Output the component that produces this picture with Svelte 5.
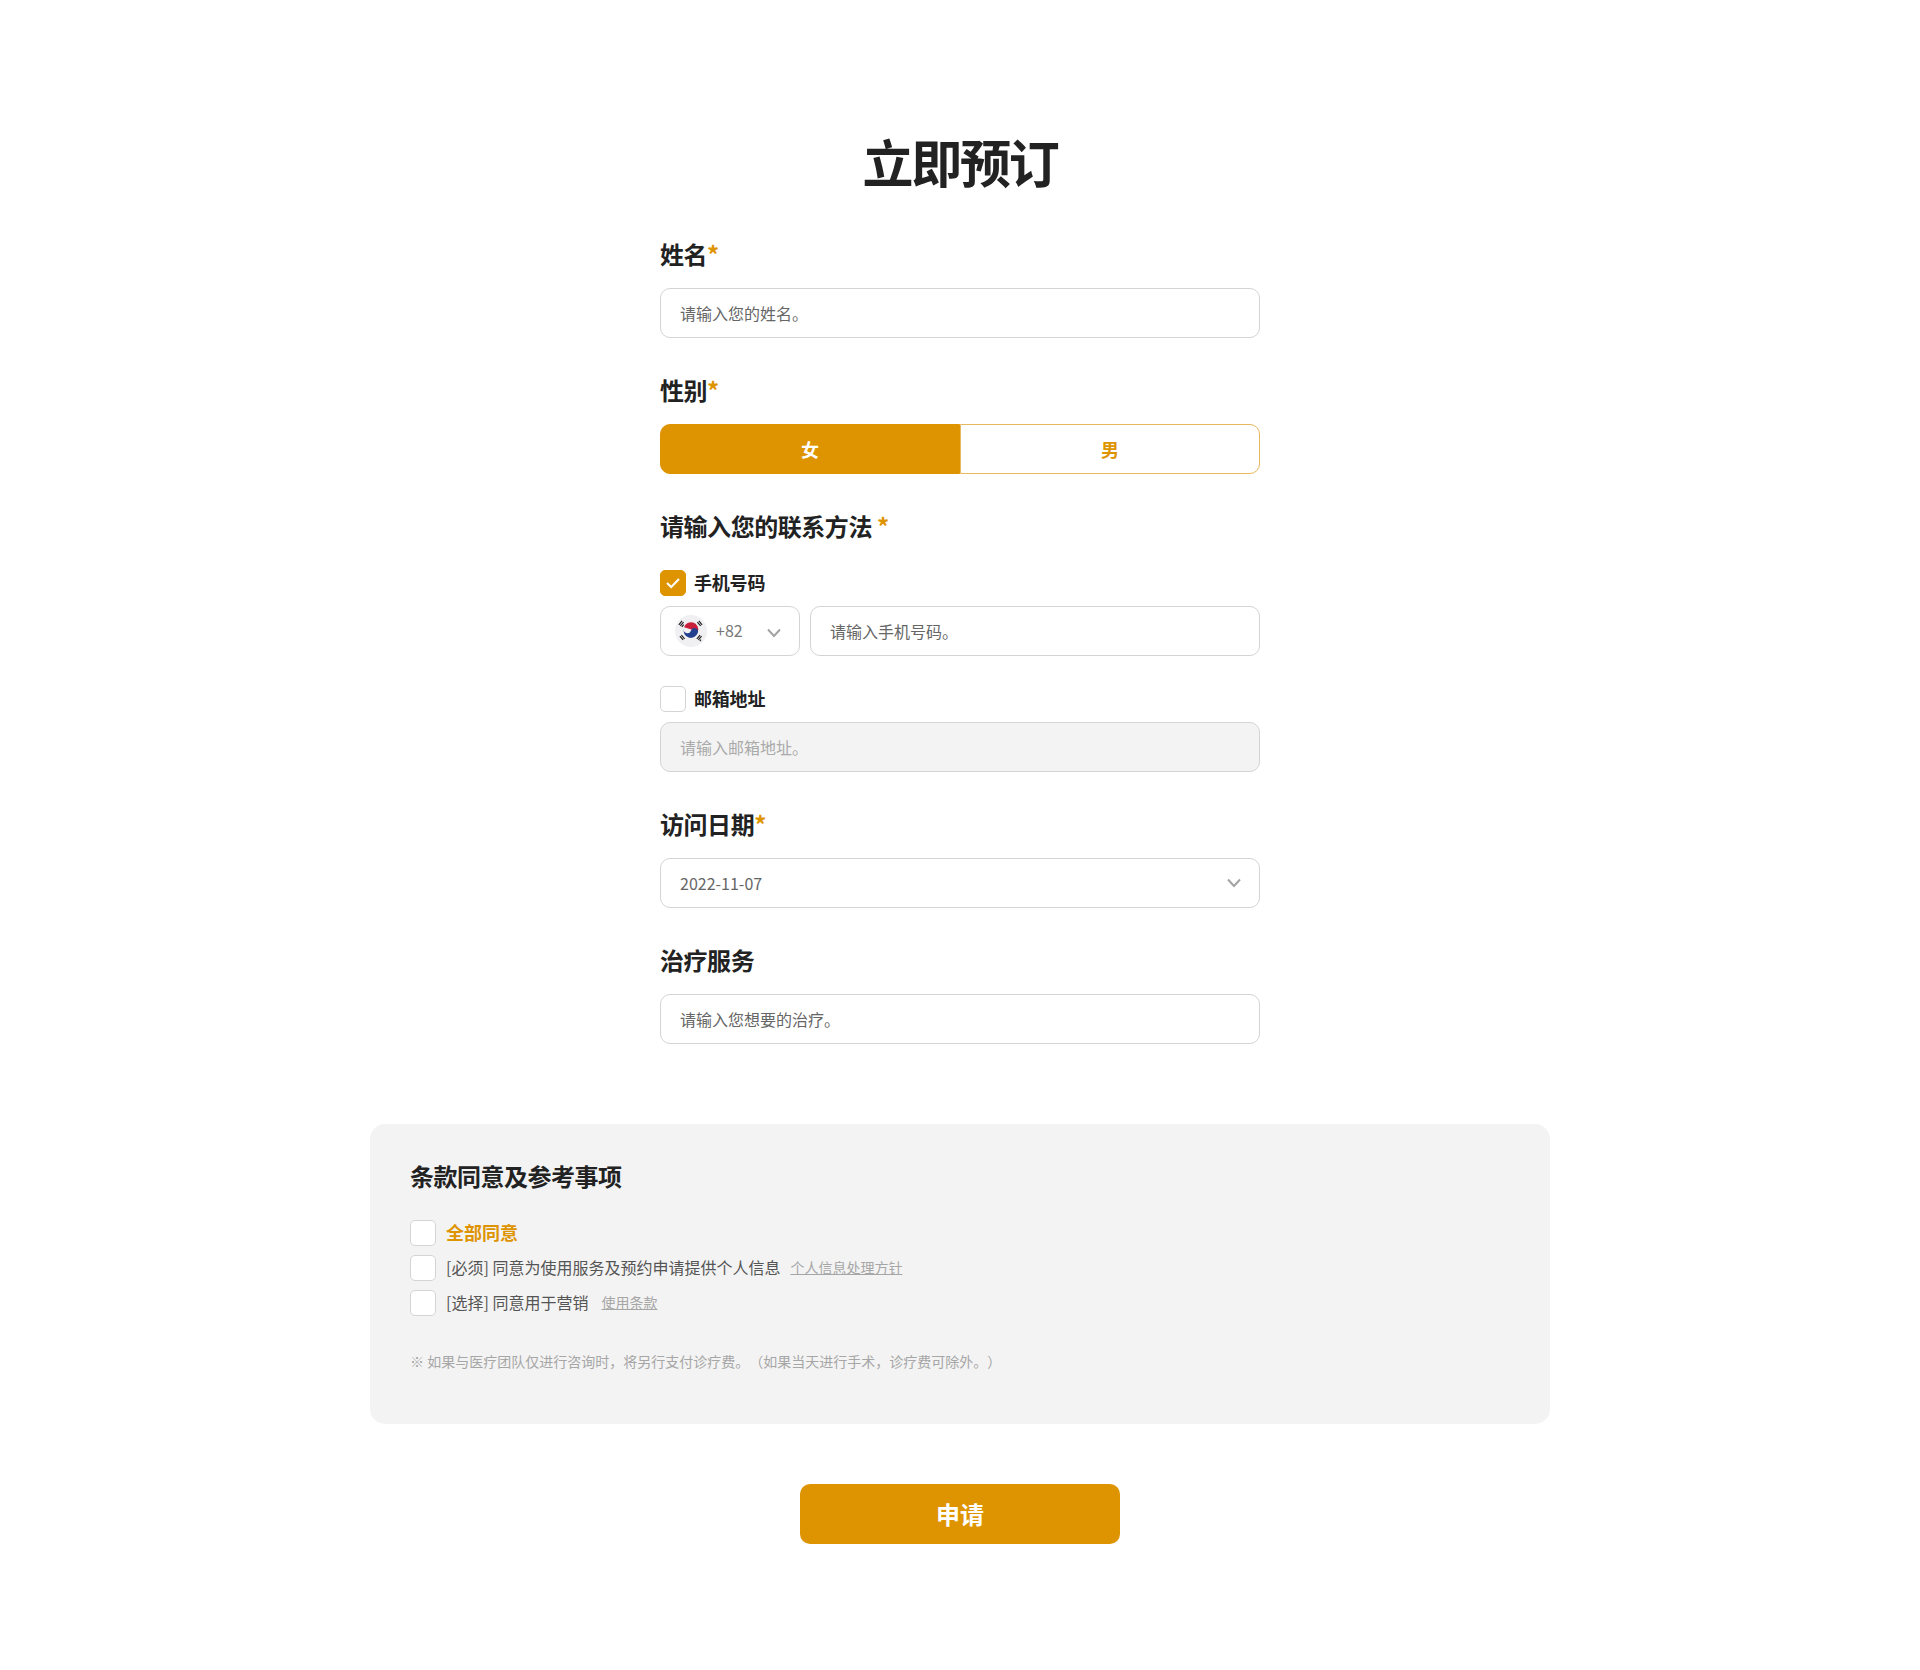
<script lang="ts">
	let gender = $state('female');
	let usePhone = $state(true);
	let useEmail = $state(false);
	let agreeAll = $state(false);
	let agreePrivacy = $state(false);
	let agreeMarketing = $state(false);
</script>

{#snippet chevron()}
	<svg class="chevron" width="16" height="10" viewBox="0 0 16 10" aria-hidden="true">
		<path d="M2 1.5 L8 8 L14 1.5" fill="none" stroke="#a3a3a3" stroke-width="2" />
	</svg>
{/snippet}

{#snippet check(checked: boolean, toggle: () => void)}
	<button class="check" class:checked onclick={toggle} aria-pressed={checked} aria-label="toggle">
		{#if checked}
			<svg width="16" height="12" viewBox="0 0 16 12" aria-hidden="true">
				<path d="M2 6 L6.2 10 L14 2" fill="none" stroke="#fff" stroke-width="2" />
			</svg>
		{/if}
	</button>
{/snippet}

<main class="page">
	<h1>立即预订</h1>

	<form class="form" onsubmit={(e) => e.preventDefault()}>
		<section class="group">
			<h2>姓名<em>*</em></h2>
			<input class="field" placeholder="请输入您的姓名。" />
		</section>

		<section class="group">
			<h2>性别<em>*</em></h2>
			<div class="gender">
				<button type="button" class:on={gender === 'female'} onclick={() => (gender = 'female')}>女</button>
				<button type="button" class:on={gender === 'male'} onclick={() => (gender = 'male')}>男</button>
			</div>
		</section>

		<section class="group contact">
			<h2>请输入您的联系方法 <em>*</em></h2>
			<div class="check-row">
				{@render check(usePhone, () => (usePhone = !usePhone))}
				<span>手机号码</span>
			</div>
			<div class="phone">
				<div class="country">
					<svg class="flag" width="32" height="32" viewBox="0 0 30 30" aria-hidden="true">
						<circle cx="15" cy="15" r="15" fill="#f0f0f3" />
						<path d="M8.5 11.5a6.8 6.8 0 0 1 13 4z" fill="#c8203a" />
						<path d="M8.4 12.5a6.8 6.8 0 0 0 13 4.2 3.4 3.4 0 0 0-6.5-2 3.4 3.4 0 0 1-6.5-2.2z" fill="#23408f" />
						<g stroke="#222" stroke-width="1.1" fill="none">
							<path d="M4.6 10.2l3-3.6M6 11.2l3-3.6M7.400 12.200l1.800-2.200" transform="translate(-1 -1)" />
							<path d="M21 6.600l3 3.600M22.400 5.600l3 3.600" />
							<path d="M4.600 19.800l3 3.600M6 18.800l3 3.600" />
							<path d="M21 23.400l3-3.600M22.400 24.400l3-3.600M23.800 25.400l1-1.200" transform="translate(-.5 -1)" />
						</g>
					</svg>
					<span class="code">+82</span>
					{@render chevron()}
				</div>
				<input class="field" placeholder="请输入手机号码。" />
			</div>
			<div class="check-row email-row">
				{@render check(useEmail, () => (useEmail = !useEmail))}
				<span>邮箱地址</span>
			</div>
			<input class="field" placeholder="请输入邮箱地址。" disabled={!useEmail} />
		</section>

		<section class="group">
			<h2>访问日期<em>*</em></h2>
			<div class="field select">
				<span>2022-11-07</span>
				{@render chevron()}
			</div>
		</section>

		<section class="group">
			<h2>治疗服务</h2>
			<input class="field" placeholder="请输入您想要的治疗。" />
		</section>
	</form>

	<section class="terms">
		<h3>条款同意及参考事项</h3>
		<div class="term all">
			{@render check(agreeAll, () => (agreeAll = !agreeAll))}
			<span>全部同意</span>
		</div>
		<div class="term">
			{@render check(agreePrivacy, () => (agreePrivacy = !agreePrivacy))}
			<span>[必须] 同意为使用服务及预约申请提供个人信息</span>
			<a href="#privacy">个人信息处理方针</a>
		</div>
		<div class="term">
			{@render check(agreeMarketing, () => (agreeMarketing = !agreeMarketing))}
			<span>[选择] 同意用于营销</span>
			<a class="wide" href="#terms">使用条款</a>
		</div>
		<p class="note">※ 如果与医疗团队仅进行咨询时，将另行支付诊疗费。（如果当天进行手术，诊疗费可除外。）</p>
	</section>

	<button class="submit" type="button">申请</button>
</main>

<style>
	:global(body) {
		background: #fff;
	}

	.page {
		min-height: 1670px;
		box-sizing: border-box;
		padding-top: 126px;
		display: flex;
		flex-direction: column;
		align-items: center;
		font-family: "Noto Sans CJK SC", "Noto Sans", sans-serif;
		color: #222;
		text-spacing-trim: space-all;
	}

	h1 {
		margin: 0;
		font-size: 51px;
		line-height: 70px;
		font-weight: 700;
		letter-spacing: -0.045em;
	}

	.form {
		width: 600px;
		margin-top: 41px;
		display: flex;
		flex-direction: column;
		gap: 35px;
	}

	.group {
		display: flex;
		flex-direction: column;
	}

	h2 {
		margin: 0 0 17px;
		font-size: 24px;
		line-height: 34px;
		font-weight: 700;
		letter-spacing: -0.45px;
	}

	em {
		font-style: normal;
		color: #de9400;
	}

	.field {
		box-sizing: border-box;
		width: 100%;
		height: 50px;
		padding: 0 19px;
		border: 1px solid #d4d4d4;
		border-radius: 10px;
		background: #fff;
		font: inherit;
		font-size: 16px;
		color: #666;
		outline: none;
	}

	.field::placeholder {
		color: #666;
		opacity: 1;
	}

	.field:disabled {
		background: #f3f3f3;
	}

	.field:disabled::placeholder {
		color: #aaa;
	}

	.gender {
		display: grid;
		grid-template-columns: 1fr 1fr;
		height: 50px;
	}

	.gender button {
		border: 1px solid #e8b85e;
		background: #fff;
		font: inherit;
		font-size: 18px;
		font-weight: 700;
		color: #de9400;
	}

	.gender button:first-child {
		border-radius: 10px 0 0 10px;
	}

	.gender button:last-child {
		border-radius: 0 10px 10px 0;
	}

	.gender button.on {
		background: #de9400;
		border-color: #de9400;
		color: #fff;
	}

	.contact h2 {
		margin-bottom: 27px;
	}

	.check-row {
		display: flex;
		align-items: center;
		gap: 8px;
		height: 26px;
		margin-bottom: 10px;
		font-size: 18px;
		font-weight: 700;
		letter-spacing: -0.2px;
	}

	.check-row span {
		padding-bottom: 2px;
	}

	.email-row {
		margin-top: 30px;
	}

	.check {
		flex: none;
		box-sizing: border-box;
		width: 26px;
		height: 26px;
		padding: 0;
		display: flex;
		align-items: center;
		justify-content: center;
		border: 1px solid #d4d4d4;
		border-radius: 5px;
		background: #fff;
	}

	.check.checked {
		background: #de9400;
		border-color: #de9400;
	}

	.phone {
		display: flex;
		gap: 10px;
	}

	.country {
		flex: none;
		box-sizing: border-box;
		width: 140px;
		height: 50px;
		padding: 0 17px 0 14px;
		display: flex;
		align-items: center;
		border: 1px solid #d4d4d4;
		border-radius: 10px;
	}

	.code {
		margin-left: 9px;
		padding-bottom: 2px;
		font-size: 16px;
		color: #777;
	}

	.country .chevron {
		margin-left: auto;
		margin-top: 3px;
	}

	.select {
		display: flex;
		align-items: center;
		justify-content: space-between;
		padding-right: 17px;
	}

	.terms {
		box-sizing: border-box;
		width: 1180px;
		height: 300px;
		margin-top: 80px;
		padding: 35px 40px 0;
		background: #f3f3f3;
		border-radius: 15px;
	}

	h3 {
		margin: 0 0 27px;
		font-size: 24px;
		line-height: 34px;
		font-weight: 700;
		letter-spacing: -0.5px;
	}

	.term {
		display: flex;
		align-items: center;
		height: 26px;
		margin-top: 9px;
		font-size: 16px;
		color: #555;
	}

	.term.all {
		margin-top: 0;
		font-size: 18px;
		font-weight: 700;
		color: #de9400;
	}

	.term span {
		margin-left: 10px;
		padding-bottom: 2px;
	}

	.term a {
		margin-left: 10px;
		padding-bottom: 2px;
		font-size: 14px;
		color: #a6a6a6;
		text-decoration: underline;
	}

	.term a.wide {
		margin-left: 13px;
	}

	.note {
		margin: 35px 0 0;
		font-size: 14px;
		line-height: 20px;
		color: #a6a6a6;
	}

	.submit {
		width: 320px;
		height: 60px;
		margin-top: 60px;
		padding: 0 0 2px;
		border: 0;
		border-radius: 10px;
		background: #de9400;
		color: #fff;
		font: inherit;
		font-size: 24px;
		font-weight: 700;
	}
</style>
